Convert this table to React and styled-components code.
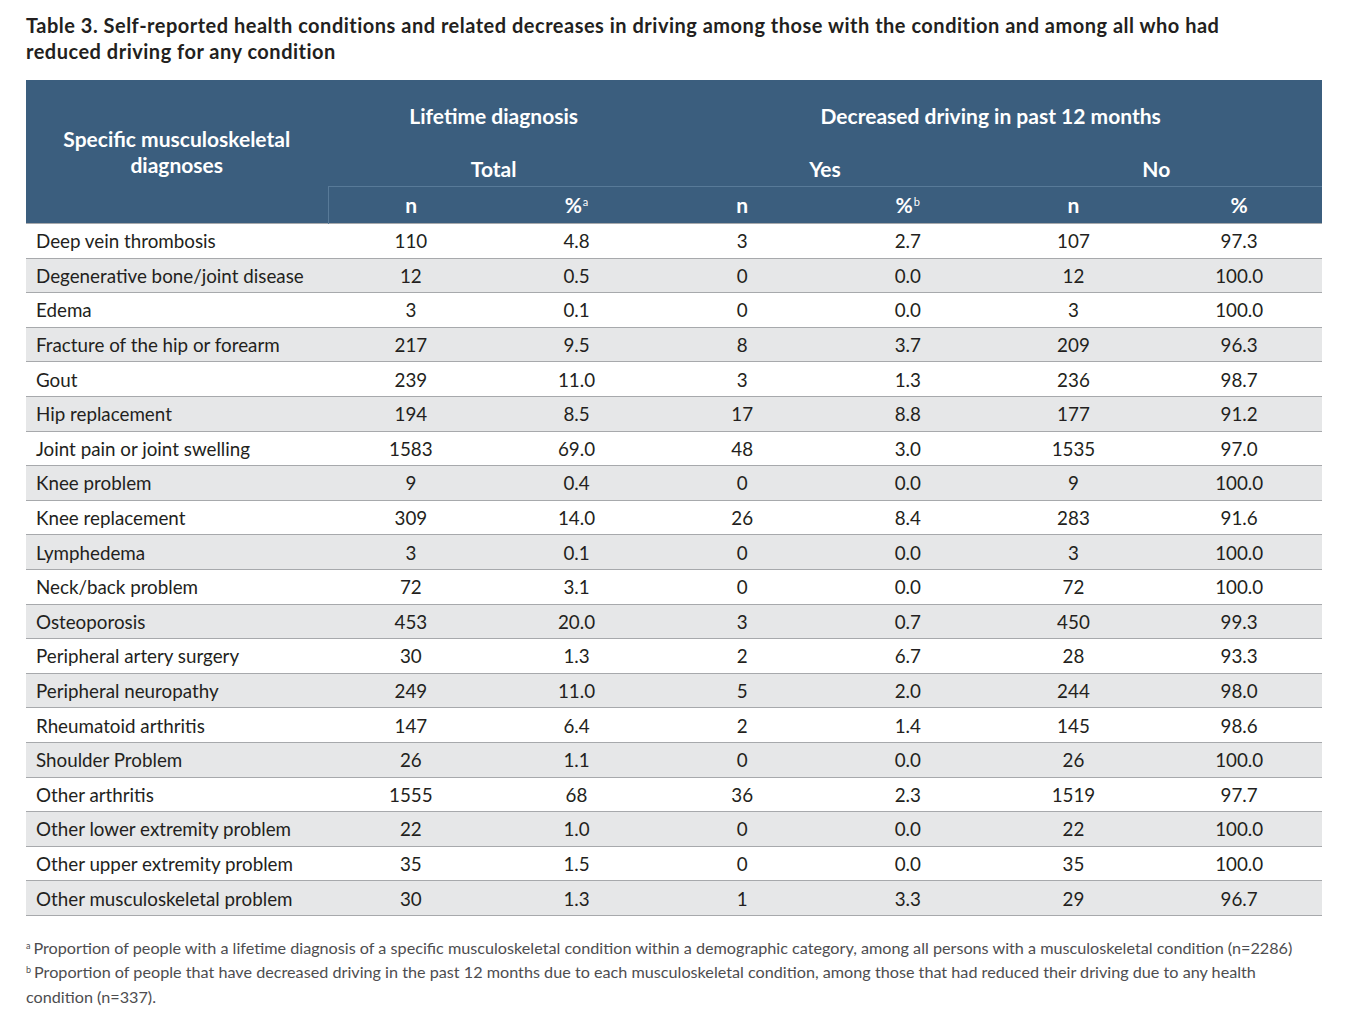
import styled, { createGlobalStyle } from 'styled-components';

const GlobalStyle = createGlobalStyle`
  html, body {
    margin: 0;
    padding: 0;
    background: #ffffff;
  }
  body {
    font-family: Lato, "Open Sans", "Liberation Sans", sans-serif;
    color: #231f20;
  }
`;

const rows = [
  ['Deep vein thrombosis', '110', '4.8', '3', '2.7', '107', '97.3'],
  ['Degenerative bone/joint disease', '12', '0.5', '0', '0.0', '12', '100.0'],
  ['Edema', '3', '0.1', '0', '0.0', '3', '100.0'],
  ['Fracture of the hip or forearm', '217', '9.5', '8', '3.7', '209', '96.3'],
  ['Gout', '239', '11.0', '3', '1.3', '236', '98.7'],
  ['Hip replacement', '194', '8.5', '17', '8.8', '177', '91.2'],
  ['Joint pain or joint swelling', '1583', '69.0', '48', '3.0', '1535', '97.0'],
  ['Knee problem', '9', '0.4', '0', '0.0', '9', '100.0'],
  ['Knee replacement', '309', '14.0', '26', '8.4', '283', '91.6'],
  ['Lymphedema', '3', '0.1', '0', '0.0', '3', '100.0'],
  ['Neck/back problem', '72', '3.1', '0', '0.0', '72', '100.0'],
  ['Osteoporosis', '453', '20.0', '3', '0.7', '450', '99.3'],
  ['Peripheral artery surgery', '30', '1.3', '2', '6.7', '28', '93.3'],
  ['Peripheral neuropathy', '249', '11.0', '5', '2.0', '244', '98.0'],
  ['Rheumatoid arthritis', '147', '6.4', '2', '1.4', '145', '98.6'],
  ['Shoulder Problem', '26', '1.1', '0', '0.0', '26', '100.0'],
  ['Other arthritis', '1555', '68', '36', '2.3', '1519', '97.7'],
  ['Other lower extremity problem', '22', '1.0', '0', '0.0', '22', '100.0'],
  ['Other upper extremity problem', '35', '1.5', '0', '0.0', '35', '100.0'],
  ['Other musculoskeletal problem', '30', '1.3', '1', '3.3', '29', '96.7'],
];

const Page = styled.div`
  padding: 12px 24px 0 26px;
  width: 1296px;
`;

const Title = styled.h2`
  margin: 0 0 16px 0;
  width: 1250px;
  font-size: 20px;
  line-height: 26px;
  font-weight: 700;
  color: #231f20;
  letter-spacing: 0.5px;
`;

const Table = styled.table`
  width: 1296px;
  border-collapse: collapse;
  table-layout: fixed;
  border-bottom: 1px solid #a7a9ac;
`;

const HeadCell = styled.th`
  background: #3b5e7e;
  color: #ffffff;
  font-weight: 700;
  font-size: 21px;
  line-height: 26px;
  text-align: center;
  padding: 0;
  height: ${(p) => p.$h || 34}px;
  vertical-align: middle;
  border: none;
`;

const SubHeadCell = styled(HeadCell)`
  border-top: 1px solid #587a98;
  border-left: ${(p) => (p.$first ? '1px solid #587a98' : 'none')};
`;

const Row = styled.tr`
  background: ${(p) => (p.$alt ? '#e6e7e8' : '#ffffff')};
  height: 34.6px;
`;

const NameCell = styled.td`
  text-align: left;
  padding: 0 0 0 10px;
  font-size: 18.8px;
  border-top: 1px solid #a7a9ac;
  color: #231f20;
`;

const NumCell = styled.td`
  text-align: center;
  padding: 0;
  font-size: 18.8px;
  border-top: 1px solid #a7a9ac;
  color: #231f20;
`;

const Sup = styled.span`
  font-size: 11px;
  line-height: 0;
  vertical-align: 7px;
  font-weight: 400;
  margin-left: 1px;
`;

const Notes = styled.div`
  margin-top: 20px;
  font-size: 16.2px;
  line-height: 24.5px;
  color: #4d4d4f;
`;

const Note = styled.p`
  margin: 0;
`;

const NoteSup = styled.span`
  font-size: 9px;
  line-height: 0;
  vertical-align: 5px;
  margin-right: 3px;
`;

export default function App() {
  return (
    <>
      <GlobalStyle />
      <Page>
        <Title>
          Table 3. Self-reported health conditions and related decreases in driving among those with the condition and among all who had reduced driving for any condition
        </Title>
        <Table>
          <colgroup>
            <col style={{ width: 302 }} />
            <col />
            <col />
            <col />
            <col />
            <col />
            <col />
          </colgroup>
          <thead>
            <tr>
              <HeadCell rowSpan={3}>
                Specific musculoskeletal
                <br />
                diagnoses
              </HeadCell>
              <HeadCell colSpan={2} $h={72}>Lifetime diagnosis</HeadCell>
              <HeadCell colSpan={4} $h={72}>Decreased driving in past 12 months</HeadCell>
            </tr>
            <tr>
              <HeadCell colSpan={2} $h={34}>Total</HeadCell>
              <HeadCell colSpan={2} $h={34}>Yes</HeadCell>
              <HeadCell colSpan={2} $h={34}>No</HeadCell>
            </tr>
            <tr>
              <SubHeadCell $first $h={36}>n</SubHeadCell>
              <SubHeadCell $h={36}>%<Sup>a</Sup></SubHeadCell>
              <SubHeadCell $h={36}>n</SubHeadCell>
              <SubHeadCell $h={36}>%<Sup>b</Sup></SubHeadCell>
              <SubHeadCell $h={36}>n</SubHeadCell>
              <SubHeadCell $h={36}>%</SubHeadCell>
            </tr>
          </thead>
          <tbody>
            {rows.map((r, i) => (
              <Row key={r[0]} $alt={i % 2 === 1}>
                <NameCell>{r[0]}</NameCell>
                {r.slice(1).map((v, j) => (
                  <NumCell key={j}>{v}</NumCell>
                ))}
              </Row>
            ))}
          </tbody>
        </Table>
        <Notes>
          <Note>
            <NoteSup>a</NoteSup>Proportion of people with a lifetime diagnosis of a specific musculoskeletal condition within a demographic category, among all persons with a musculoskeletal condition (n=2286)
          </Note>
          <Note>
            <NoteSup>b</NoteSup>Proportion of people that have decreased driving in the past 12 months due to each musculoskeletal condition, among those that had reduced their driving due to any health condition (n=337).
          </Note>
        </Notes>
      </Page>
    </>
  );
}
